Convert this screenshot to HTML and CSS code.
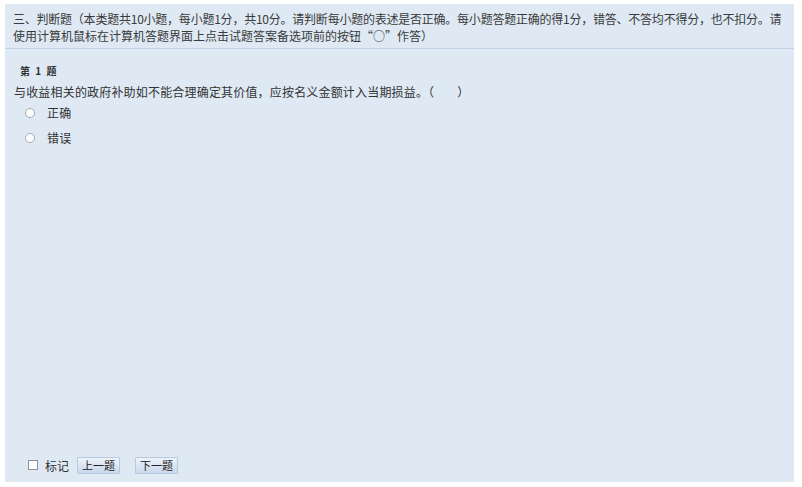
FILE: index.html
```html
<!DOCTYPE html>
<html lang="zh-CN">
<head>
<meta charset="utf-8">
<title>判断题</title>
<link rel="stylesheet" href="styles.css">
</head>
<body>
<div class="panel">
  <div class="header"><span class="line1">三、判断题（本类题共10小题，每小题1分，共10分。请判断每小题的表述是否正确。每小题答题正确的得1分，错答、不答均不得分，也不扣分。请</span><br>使用计算机鼠标在计算机答题界面上点击试题答案备选项前的按钮“○”作答）</div>
  <div class="content">
    <div class="qno">第 1 题</div>
    <div class="question">与收益相关的政府补助如不能合理确定其价值，应按名义金额计入当期损益。（&nbsp;&nbsp;&nbsp;&nbsp;&nbsp;&nbsp;&nbsp;&nbsp;）</div>
    <div class="option"><span class="radio"></span><span class="label">正确</span></div>
    <div class="option"><span class="radio"></span><span class="label">错误</span></div>
  </div>
  <div class="footer">
    <span class="check"></span><span class="mark">标记</span>
    <button class="btn">上一题</button>
    <button class="btn btn-next">下一题</button>
  </div>
</div>
</body>
</html>
```

FILE: styles.css
```css
html, body {
  margin: 0;
  padding: 0;
  background: #ffffff;
}
body {
  padding: 4px 0 0 5px;
  font-family: "Noto Sans CJK SC", "Noto Sans", sans-serif;
  color: #333;
}
.panel {
  width: 789px;
  height: 478px;
  background: #dee9f4;
  display: flex;
  flex-direction: column;
}
.header {
  padding: 6px 8px 4px 8px;
  font-size: 12px;
  line-height: 17px;
  border-bottom: 1px solid #c2d1e6;
  white-space: nowrap;
  color: #3a3a3a;
}
.line1 {
  letter-spacing: -0.23px;
}
.content {
  flex: 1;
  padding: 15px 0 0 9px;
}
.qno {
  font-size: 10px;
  line-height: 14px;
  font-weight: bold;
  padding-left: 6px;
  word-spacing: 3px;
  color: #333;
}
.question {
  margin-top: 5px;
  font-size: 12px;
  line-height: 17px;
  letter-spacing: 0.18px;
  color: #333;
}
.option {
  display: flex;
  align-items: center;
  height: 25px;
  font-size: 12px;
}
.radio {
  width: 8px;
  height: 8px;
  border: 1px solid #a4a8ad;
  border-radius: 50%;
  background: #fff;
  margin-left: 11px;
  margin-right: 12px;
}
.label {
  letter-spacing: 0.3px;
}
.footer {
  display: flex;
  align-items: center;
  padding: 0 0 8px 23px;
  height: 18px;
  font-size: 12px;
}
.check {
  width: 8px;
  height: 8px;
  border: 1px solid #8d9198;
  background: #fff;
  margin-right: 7px;
}
.mark {
  margin-right: 8px;
}
.btn {
  font-family: "Noto Sans CJK SC", sans-serif;
  font-size: 11px;
  line-height: 13px;
  height: 17px;
  width: 43px;
  padding: 0;
  border: 1px solid #b8c8de;
  border-radius: 1px;
  background: linear-gradient(#eef3fa, #c9d8ec);
  color: #222;
}
.btn-next {
  margin-left: 15px;
}
```
